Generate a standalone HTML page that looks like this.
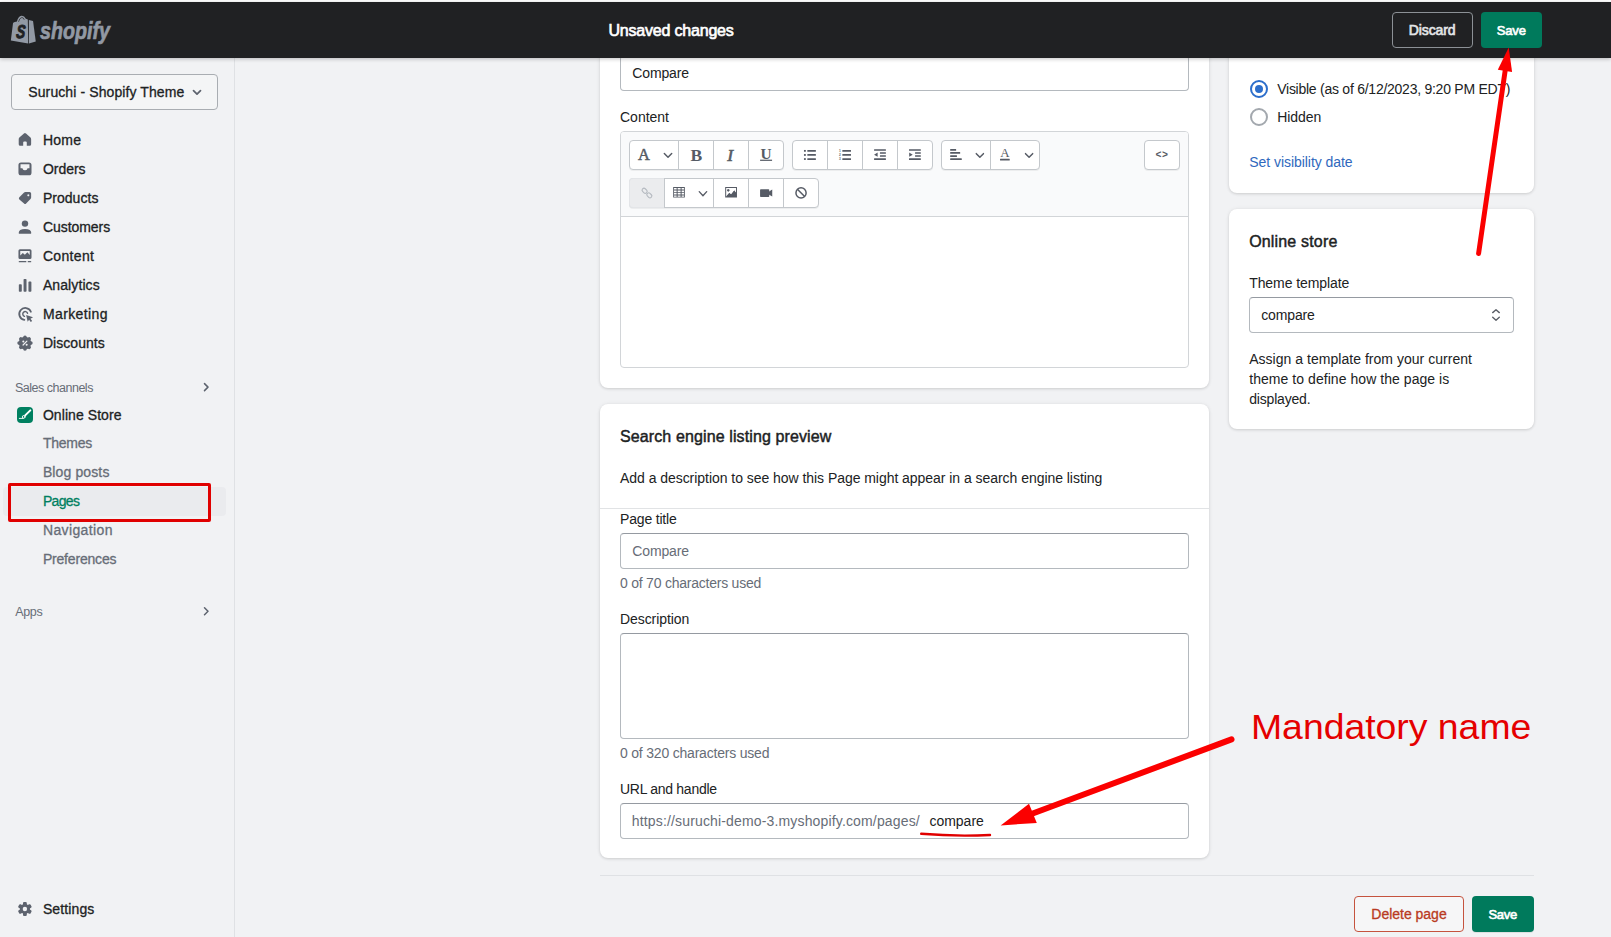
<!DOCTYPE html>
<html lang="en">
<head>
<meta charset="utf-8">
<title>Compare - Shopify</title>
<style>
*{box-sizing:border-box;margin:0;padding:0}
html,body{width:1611px;height:937px;overflow:hidden}
body{position:relative;background:#f1f2f4;font-family:"Liberation Sans",sans-serif;font-size:14px;line-height:20px;color:#202223}
.a,.t,.card,.inp,.btn,.tb,svg{position:absolute}
.t{white-space:pre;line-height:20px;height:20px}
.sb{-webkit-text-stroke:0.3px currentColor}
.sb2{-webkit-text-stroke:0.45px currentColor}
.sb3{-webkit-text-stroke:0.65px currentColor}
.card{background:#fff;border-radius:8px;box-shadow:0 0 5px rgba(23,24,24,.05),0 1px 3px rgba(0,0,0,.13)}
.inp{background:#fff;border:1px solid #b4b9be;border-top-color:#959aa1;border-radius:4px}
.btn{border-radius:4px}
.tb{height:30px;background:#fff;border:1px solid #c4c8cc;border-radius:4px;box-shadow:0 1px 0 rgba(0,0,0,.05)}
.tb i{position:absolute;top:0;width:1px;height:28px;background:#c4c8cc}
svg{overflow:visible}
</style>
</head>
<body>
<nav aria-label="Main navigation">
<!-- ===== sidebar ===== -->
<div class="a" style="left:0;top:58px;width:235px;height:879px;background:#f1f2f4;border-right:1px solid #dfe1e4"></div>
<div class="a" style="left:11px;top:74px;width:207px;height:36px;border:1px solid #a9adb2;border-radius:4px;background:#f4f5f6"></div>
<div class="a" style="left:3px;top:487px;width:223px;height:29px;border-radius:4px;background:#eaebee"></div>
<div class="a" style="left:8px;top:483px;width:203px;height:39px;border:3px solid #e00000;border-radius:2px"></div>
<div class="a" style="left:17px;top:407px;width:16px;height:16px;border-radius:4px;background:#008060"></div>

<svg style="left:10px;top:125px" width="120" height="120" viewBox="0 0 937 937" fill="#5d636e">
 <path d="M109 66 Q117 59 125 66 L160 98 Q165 103 165 112 L165 150 Q165 162 153 162 L131 162 L131 136 Q131 128 123 128 L111 128 Q103 128 103 136 L103 162 L80 162 Q68 162 68 150 L68 112 Q68 103 73 98 Z"/>
 <path fill-rule="evenodd" d="M86 292 L148 292 Q168 292 168 312 L168 372 Q168 392 148 392 L86 392 Q66 392 66 372 L66 312 Q66 292 86 292 Z M82 307 L82 337 L97 337 Q99 353 115 353 L119 353 Q135 353 137 337 L152 337 L152 307 Z"/>
 <path fill-rule="evenodd" d="M120 523 L153 523 Q165 523 165 535 L165 566 Q165 573 160 578 L126 613 Q118 621 110 613 L73 581 Q65 573 73 565 L110 528 Q114 523 120 523 Z M143 540 a8 8 0 1 0 0.1 0 Z"/>
 <circle cx="117" cy="770" r="25"/>
 <path d="M68 843 Q68 812 117 812 Q166 812 166 843 Q166 850 159 850 L75 850 Q68 850 68 843 Z"/>
</svg>

<svg style="left:10px;top:240px" width="120" height="120" viewBox="0 0 937 937" fill="#5d636e">
 <path fill-rule="evenodd" d="M78 72 L156 72 Q168 72 168 84 L168 136 Q168 148 156 148 L78 148 Q66 148 66 136 L66 84 Q66 72 78 72 Z M80 86 L80 122 L100 102 L116 116 L136 96 L154 118 L154 86 Z"/>
 <circle cx="134" cy="99" r="0"/>
 <rect x="68" y="163" width="60" height="11" rx="5"/>
 <rect x="138" y="163" width="28" height="11" rx="5"/>
 <rect x="69" y="345" width="23" height="60" rx="6"/>
 <rect x="106" y="305" width="23" height="100" rx="6"/>
 <rect x="144" y="325" width="23" height="80" rx="6"/>
 <path d="M163 560 A47 47 0 1 0 112 624" fill="none" stroke="#5d636e" stroke-width="14" stroke-linecap="round"/>
 <path d="M137 572 A19 19 0 1 0 113 596" fill="none" stroke="#5d636e" stroke-width="11" stroke-linecap="round"/>
 <path d="M126 586 L180 604 L160 614 L173 632 L162 640 L149 622 L138 638 Z"/>
 <g transform="translate(117 805)">
  <circle r="49"/>
  <g id="sc"><circle cx="0" cy="-46" r="14"/><circle cx="0" cy="46" r="14"/><circle cx="-46" cy="0" r="14"/><circle cx="46" cy="0" r="14"/></g>
  <g transform="rotate(45)"><circle cx="0" cy="-46" r="14"/><circle cx="0" cy="46" r="14"/><circle cx="-46" cy="0" r="14"/><circle cx="46" cy="0" r="14"/></g>
  <circle cx="-13" cy="-13" r="8" fill="#f1f2f4"/><circle cx="13" cy="13" r="8" fill="#f1f2f4"/>
  <path d="M-15 15 L15 -15" stroke="#f1f2f4" stroke-width="9" stroke-linecap="round"/>
 </g>
</svg>

<svg style="left:0;top:0" width="240" height="937" viewBox="0 0 240 937" fill="none" stroke="#5d636e" stroke-width="1.5" stroke-linecap="round" stroke-linejoin="round">
 <path d="M193.5 90.7 L197 94.2 L200.5 90.7" stroke-width="1.7"/>
 <path d="M204.5 383.6 L208 387.1 L204.5 390.6" stroke-width="1.5"/>
 <path d="M204.5 607.8 L208 611.3 L204.5 614.8" stroke-width="1.5"/>
 <!-- online store brush -->
 <path d="M19.3 418.4 L23.2 418.4" stroke="#fff" stroke-width="0.9"/>
 <path d="M25.2 415.4 L30.3 410.4" stroke="#fff" stroke-width="2"/>
 <circle cx="23.7" cy="416.9" r="1.35" fill="none" stroke="#fff" stroke-width="1"/>
 <!-- settings gear -->
 <g transform="translate(24.9 909)" stroke="none" fill="#5d636e">
  <circle r="5.1"/>
  <g><rect x="-1.9" y="-7.1" width="3.8" height="14.2" rx="1.1"/><rect x="-1.9" y="-7.1" width="3.8" height="14.2" rx="1.1" transform="rotate(60)"/><rect x="-1.9" y="-7.1" width="3.8" height="14.2" rx="1.1" transform="rotate(120)"/></g>
  <circle r="2.2" fill="#f1f2f4"/>
 </g>
</svg>
<div class="t sb" style="left:28.3px;top:82.0px;font-size:14px;letter-spacing:0.099px;color:#202223;">Suruchi - Shopify Theme</div>
<div class="t sb" style="left:42.9px;top:130.0px;font-size:14px;letter-spacing:0.280px;color:#202223;">Home</div>
<div class="t sb" style="left:42.9px;top:159.0px;font-size:14px;letter-spacing:-0.019px;color:#202223;">Orders</div>
<div class="t sb" style="left:42.9px;top:188.0px;font-size:14px;letter-spacing:0.036px;color:#202223;">Products</div>
<div class="t sb" style="left:42.9px;top:217.0px;font-size:14px;letter-spacing:-0.048px;color:#202223;">Customers</div>
<div class="t sb" style="left:42.9px;top:246.0px;font-size:14px;letter-spacing:0.326px;color:#202223;">Content</div>
<div class="t sb" style="left:42.9px;top:275.0px;font-size:14px;letter-spacing:0.096px;color:#202223;">Analytics</div>
<div class="t sb" style="left:42.9px;top:304.0px;font-size:14px;letter-spacing:0.404px;color:#202223;">Marketing</div>
<div class="t sb" style="left:42.9px;top:333.0px;font-size:14px;letter-spacing:0.054px;color:#202223;">Discounts</div>
<div class="t" style="left:15.0px;top:378.0px;font-size:12.5px;letter-spacing:-0.491px;color:#676d77;">Sales channels</div>
<div class="t sb" style="left:42.9px;top:405.0px;font-size:14px;letter-spacing:0.070px;color:#202223;">Online Store</div>
<div class="t sb" style="left:42.9px;top:433.0px;font-size:14px;letter-spacing:-0.256px;color:#676d77;">Themes</div>
<div class="t sb" style="left:42.9px;top:462.0px;font-size:14px;letter-spacing:0.125px;color:#676d77;">Blog posts</div>
<div class="t sb" style="left:42.9px;top:491.0px;font-size:14px;letter-spacing:-0.651px;color:#007f5f;">Pages</div>
<div class="t sb" style="left:42.9px;top:520.0px;font-size:14px;letter-spacing:0.383px;color:#676d77;">Navigation</div>
<div class="t sb" style="left:42.9px;top:549.0px;font-size:14px;letter-spacing:-0.188px;color:#676d77;">Preferences</div>
<div class="t" style="left:15.2px;top:602.0px;font-size:12.5px;letter-spacing:-0.333px;color:#676d77;">Apps</div>
<div class="t sb" style="left:42.9px;top:899.0px;font-size:14px;letter-spacing:0.115px;color:#202223;">Settings</div>
</nav>
<main>
<!-- ===== main column ===== -->
<div class="card" style="left:600px;top:20px;width:609px;height:368px"></div>
<div class="inp" style="left:620px;top:55px;width:569px;height:36px"></div>
<div class="a" style="left:620px;top:131px;width:569px;height:237px;border:1px solid #d2d5d8;border-radius:4px;background:#fff"></div>
<div class="a" style="left:621px;top:132px;width:567px;height:85px;background:#f9fafb;border-bottom:1px solid #d2d5d8;border-radius:3px 3px 0 0"></div>

<div class="tb" style="left:629px;top:140px;width:155px"><i style="left:48px"></i><i style="left:83px"></i><i style="left:118px"></i></div>
<div class="tb" style="left:792px;top:140px;width:141px"><i style="left:34px"></i><i style="left:69px"></i><i style="left:104px"></i></div>
<div class="tb" style="left:941px;top:140px;width:99px"><i style="left:48px"></i></div>
<div class="tb" style="left:1144px;top:140px;width:36px"></div>
<div class="tb" style="left:629px;top:178px;width:190px"><i style="left:34px"></i><i style="left:83px"></i><i style="left:118px"></i><i style="left:153px"></i></div>
<div class="a" style="left:629px;top:178px;width:35px;height:30px;background:#ebecee;border:1px solid #e3e5e8;border-right:0;border-radius:4px 0 0 4px"></div>

<div class="card" style="left:600px;top:404px;width:609px;height:454px"></div>
<div class="a" style="left:600px;top:508px;width:609px;height:1px;background:#e1e3e5"></div>
<div class="inp" style="left:620px;top:533px;width:569px;height:36px"></div>
<div class="inp" style="left:620px;top:633px;width:569px;height:106px"></div>
<div class="inp" style="left:620px;top:803px;width:569px;height:36px"></div>

<div class="a" style="left:600px;top:875px;width:934px;height:1px;background:#dfe1e4"></div>
<div class="btn a" style="left:1354px;top:896px;width:110px;height:36px;border:1px solid #c5533e;background:#f6f6f7"></div>
<div class="btn a" style="left:1472px;top:896px;width:62px;height:36px;background:#007a5c;box-shadow:0 1px 0 rgba(0,0,0,.08)"></div>

<svg style="left:625px;top:136px" width="165" height="38" viewBox="0 0 1611 371" fill="#565b65">
 <text x="185" y="235" text-anchor="middle" font-family="Liberation Serif, serif" font-weight="400" font-size="160" stroke="#565b65" stroke-width="5">A</text>
 <path d="M384 170 L420 208 L456 170" fill="none" stroke="#565b65" stroke-width="14" stroke-linecap="round" stroke-linejoin="round"/>
 <text x="698" y="241" text-anchor="middle" font-family="Liberation Serif, serif" font-weight="700" font-size="172">B</text>
 <text x="1028" y="241" text-anchor="middle" font-family="Liberation Serif, serif" font-weight="400" font-style="italic" font-size="172" stroke="#565b65" stroke-width="6">I</text>
 <text x="1377" y="222" text-anchor="middle" font-family="Liberation Serif, serif" font-weight="700" font-size="150">U</text>
 <rect x="1319" y="231" width="117" height="12"/>
</svg>

<svg style="left:790px;top:136px" width="150" height="38" viewBox="0 0 1611 408" fill="#565b65">
 <rect x="150" y="150" width="20" height="19"/><rect x="186" y="150" width="92" height="19" rx="3"/>
 <rect x="150" y="194" width="20" height="19"/><rect x="186" y="194" width="92" height="19" rx="3"/>
 <rect x="150" y="238" width="20" height="19"/><rect x="186" y="238" width="92" height="19" rx="3"/>
 <text x="526" y="168" font-family="Liberation Sans, sans-serif" font-weight="700" font-size="34">1</text>
 <text x="526" y="213" font-family="Liberation Sans, sans-serif" font-weight="700" font-size="34">2</text>
 <text x="526" y="258" font-family="Liberation Sans, sans-serif" font-weight="700" font-size="34">3</text>
 <rect x="562" y="150" width="93" height="19" rx="3"/><rect x="562" y="194" width="93" height="19" rx="3"/><rect x="562" y="238" width="93" height="19" rx="3"/>
 <rect x="903" y="141" width="127" height="18" rx="3"/><rect x="903" y="239" width="127" height="18" rx="3"/>
 <rect x="966" y="174" width="64" height="17" rx="3"/><rect x="966" y="206" width="64" height="17" rx="3"/>
 <path d="M903 200 L941 176 L941 224 Z"/>
 <rect x="1278" y="141" width="127" height="18" rx="3"/><rect x="1278" y="239" width="127" height="18" rx="3"/>
 <rect x="1343" y="174" width="62" height="17" rx="3"/><rect x="1343" y="206" width="62" height="17" rx="3"/>
 <path d="M1280 176 L1318 200 L1280 224 Z"/>
</svg>

<svg style="left:935px;top:136px" width="260" height="38" viewBox="0 0 1611 235" fill="#565b65">
 <rect x="94" y="80" width="37" height="11" rx="2"/><rect x="94" y="99" width="62" height="11" rx="2"/>
 <rect x="94" y="119" width="42" height="11" rx="2"/><rect x="94" y="138" width="72" height="11" rx="2"/>
 <path d="M256 109 L278 132 L300 109" fill="none" stroke="#565b65" stroke-width="9" stroke-linecap="round" stroke-linejoin="round"/>
 <text x="433" y="131" text-anchor="middle" font-family="Liberation Serif, serif" font-weight="400" font-size="80">A</text>
 <rect x="403" y="140" width="60" height="12" rx="2"/>
 <path d="M561 109 L583 132 L605 109" fill="none" stroke="#565b65" stroke-width="9" stroke-linecap="round" stroke-linejoin="round"/>
 <text x="1406" y="138" text-anchor="middle" font-family="Liberation Mono, monospace" font-weight="700" font-size="62" letter-spacing="2">&lt;&gt;</text>
</svg>

<svg style="left:625px;top:174px" width="200" height="38" viewBox="0 0 1611 306" fill="#565b65">
 <g fill="none" stroke="#b5bac0" stroke-width="9">
  <rect x="-22" y="-15" width="44" height="30" rx="14" transform="translate(158 135) rotate(45)"/>
  <rect x="-22" y="-15" width="44" height="30" rx="14" transform="translate(196 172) rotate(45)"/>
 </g>
 <path fill-rule="evenodd" d="M388 105 H482 V190 H388 Z M395 112 V125 H416 V112 Z M424 112 V125 H448 V112 Z M456 112 V125 H475 V112 Z M395 133 V146 H416 V133 Z M424 133 V146 H448 V133 Z M456 133 V146 H475 V133 Z M395 154 V166 H416 V154 Z M424 154 V166 H448 V154 Z M456 154 V166 H475 V154 Z M395 174 V183 H416 V174 Z M424 174 V183 H448 V174 Z M456 174 V183 H475 V174 Z"/>
 <path d="M598 142 L628 175 L658 142" fill="none" stroke="#565b65" stroke-width="11" stroke-linecap="round" stroke-linejoin="round"/>
 <path fill-rule="evenodd" d="M807 105 H902 V190 H807 Z M815 113 V182 L840 152 L855 166 L880 132 L894 150 V113 Z M832 122 a9 9 0 1 0 0.1 0 Z"/>
 <circle cx="832" cy="131" r="9"/>
 <path d="M815 182 L840 152 L855 166 L880 132 L894 152 V182 Z"/>
 <rect x="1088" y="122" width="74" height="64" rx="6"/>
 <path d="M1158 142 L1186 124 V182 L1158 166 Z"/>
 <circle cx="1418" cy="152" r="41" fill="none" stroke="#565b65" stroke-width="12"/>
 <path d="M1389 123 L1447 181" stroke="#565b65" stroke-width="12"/>
</svg>
<div class="t" style="left:632.3px;top:63.0px;font-size:14px;letter-spacing:-0.132px;color:#202223;">Compare</div>
<div class="t" style="left:620.0px;top:107.0px;font-size:14px;letter-spacing:-0.008px;color:#202223;">Content</div>
<div class="t sb2" style="left:620.0px;top:427.0px;font-size:16px;letter-spacing:0.113px;color:#202223;">Search engine listing preview</div>
<div class="t" style="left:620.0px;top:468.0px;font-size:14px;letter-spacing:-0.043px;color:#202223;">Add a description to see how this Page might appear in a search engine listing</div>
<div class="t" style="left:620.0px;top:509.0px;font-size:14px;letter-spacing:-0.175px;color:#202223;">Page title</div>
<div class="t" style="left:632.3px;top:541.0px;font-size:14px;letter-spacing:-0.149px;color:#676d77;">Compare</div>
<div class="t" style="left:620.0px;top:573.0px;font-size:14px;letter-spacing:-0.228px;color:#676d77;">0 of 70 characters used</div>
<div class="t" style="left:620.0px;top:609.0px;font-size:14px;letter-spacing:-0.073px;color:#202223;">Description</div>
<div class="t" style="left:620.0px;top:743.0px;font-size:14px;letter-spacing:-0.200px;color:#676d77;">0 of 320 characters used</div>
<div class="t" style="left:620.0px;top:779.0px;font-size:14px;letter-spacing:-0.282px;color:#202223;">URL and handle</div>
<div class="t" style="left:631.8px;top:811.0px;font-size:14px;letter-spacing:0.154px;color:#676d77;">https://suruchi-demo-3.myshopify.com/pages/</div>
<div class="t" style="left:929.5px;top:811.0px;font-size:14px;letter-spacing:-0.028px;color:#202223;">compare</div>
<div class="t sb" style="left:1371.3px;top:904.0px;font-size:14px;letter-spacing:-0.012px;color:#b93a22;">Delete page</div>
<div class="t sb3" style="left:1488.4px;top:905.0px;font-size:13px;letter-spacing:-0.280px;color:#ffffff;">Save</div>
</main>
<aside>
<!-- ===== right column ===== -->
<div class="card" style="left:1229px;top:20px;width:305px;height:173px"></div>
<div class="a" style="left:1250px;top:80px;width:18px;height:18px;border-radius:50%;border:2px solid #2c6ecb;background:#fff"></div>
<div class="a" style="left:1255px;top:85px;width:8px;height:8px;border-radius:50%;background:#2c6ecb"></div>
<div class="a" style="left:1250px;top:108px;width:18px;height:18px;border-radius:50%;border:2px solid #a3a8ae;background:#fff"></div>

<div class="card" style="left:1229px;top:209px;width:305px;height:220px"></div>
<div class="inp" style="left:1249px;top:297px;width:265px;height:36px"></div>

<svg style="left:0;top:0" width="1611" height="937" viewBox="0 0 1611 937" fill="none">
 <path d="M1492.7 312.6 L1496 309.8 L1499.3 312.6 M1492.7 317.3 L1496 320.2 L1499.3 317.3" stroke="#5c6068" stroke-width="1.4" stroke-linecap="round" stroke-linejoin="round"/>
</svg>
<div class="t" style="left:1277.2px;top:79.0px;font-size:14px;letter-spacing:-0.253px;color:#202223;">Visible (as of 6/12/2023, 9:20 PM EDT)</div>
<div class="t" style="left:1277.2px;top:107.0px;font-size:14px;letter-spacing:-0.075px;color:#202223;">Hidden</div>
<div class="t" style="left:1249.3px;top:152.0px;font-size:14px;letter-spacing:-0.055px;color:#2f68bd;">Set visibility date</div>
<div class="t sb2" style="left:1249.2px;top:232.0px;font-size:16px;letter-spacing:0.167px;color:#202223;">Online store</div>
<div class="t" style="left:1249.2px;top:273.0px;font-size:14px;letter-spacing:-0.082px;color:#202223;">Theme template</div>
<div class="t" style="left:1261.2px;top:305.0px;font-size:14px;letter-spacing:-0.128px;color:#202223;">compare</div>
<div class="t" style="left:1249.2px;top:349.0px;font-size:14px;letter-spacing:0.030px;color:#202223;">Assign a template from your current</div>
<div class="t" style="left:1249.2px;top:369.0px;font-size:14px;letter-spacing:0.054px;color:#202223;">theme to define how the page is</div>
<div class="t" style="left:1249.2px;top:389.0px;font-size:14px;letter-spacing:-0.183px;color:#202223;">displayed.</div>
</aside>
<header>
<!-- ===== top bar ===== -->
<div class="a" style="left:0;top:0;width:1611px;height:2px;background:#fff"></div>
<div class="a" style="left:0;top:2px;width:1611px;height:56px;background:#202123;box-shadow:0 1px 4px rgba(0,0,0,.24)"></div>
<div class="btn a" style="left:1392px;top:12px;width:81px;height:36px;border:1px solid #8c9196"></div>
<div class="btn a" style="left:1481px;top:12px;width:61px;height:36px;background:#007a5c"></div>

<svg style="left:5px;top:8px" width="120" height="44" viewBox="0 0 1611 591">
 <path d="M78 435 L107 204 Q110 192 132 188 L160 183 Q176 112 222 105 Q258 102 280 146 L306 156 L311 478 Z" fill="#9299a4"/>
 <path d="M320 160 L376 174 L413 451 L321 477 Z" fill="#9299a4"/>
 <path d="M181 186 Q192 136 226 127 Q248 127 258 158" fill="none" stroke="#202123" stroke-width="9"/>
 <text transform="translate(143 402) scale(.72 1) skewX(-8)" font-family="Liberation Sans, sans-serif" font-weight="700" font-style="italic" font-size="252" fill="#202123" stroke="#202123" stroke-width="12">S</text>
</svg>
<div class="t" style="left:40.2px;top:16px;font-size:24.5px;font-weight:700;font-style:italic;line-height:30px;height:30px;color:#9299a4;-webkit-text-stroke:0.7px #9299a4;transform:scaleX(.803);transform-origin:0 0">shopify</div>
<div class="t sb3" style="left:608.4px;top:21.0px;font-size:16px;letter-spacing:-0.192px;color:#ffffff;">Unsaved changes</div>
<div class="t sb3" style="left:1408.8px;top:20.0px;font-size:14px;letter-spacing:-0.128px;color:#e3e5e7;">Discard</div>
<div class="t sb3" style="left:1496.7px;top:21.0px;font-size:13px;letter-spacing:-0.114px;color:#ffffff;">Save</div>
</header>
<section aria-label="Annotations">
<svg style="left:0;top:0" width="1611" height="937" viewBox="0 0 1611 937" fill="none">
 <!-- arrow to top Save -->
 <path d="M1478.6 253.5 L1505.4 69" stroke="#fb0000" stroke-width="5" stroke-linecap="round"/>
 <path d="M1508.7 47.4 L1497.8 69.7 L1512.1 71.9 Z" fill="#fb0000"/>
 <!-- arrow to handle -->
 <path d="M1231.5 739.4 L1030 814.5" stroke="#fb0000" stroke-width="6" stroke-linecap="round"/>
 <path d="M1000.6 825.4 L1029 803.8 L1036.8 822.9 Z" fill="#fb0000"/>
 <path d="M921.2 833.8 Q955 836.6 990 835" stroke="#e00000" stroke-width="2.4" stroke-linecap="round"/>
</svg>
<div class="t" style="left:1251.4px;top:704.0px;font-size:35px;line-height:46px;height:46px;color:#e50000;transform:scaleX(1.0672);transform-origin:0 0;">Mandatory name</div>
</section>
</body>
</html>
